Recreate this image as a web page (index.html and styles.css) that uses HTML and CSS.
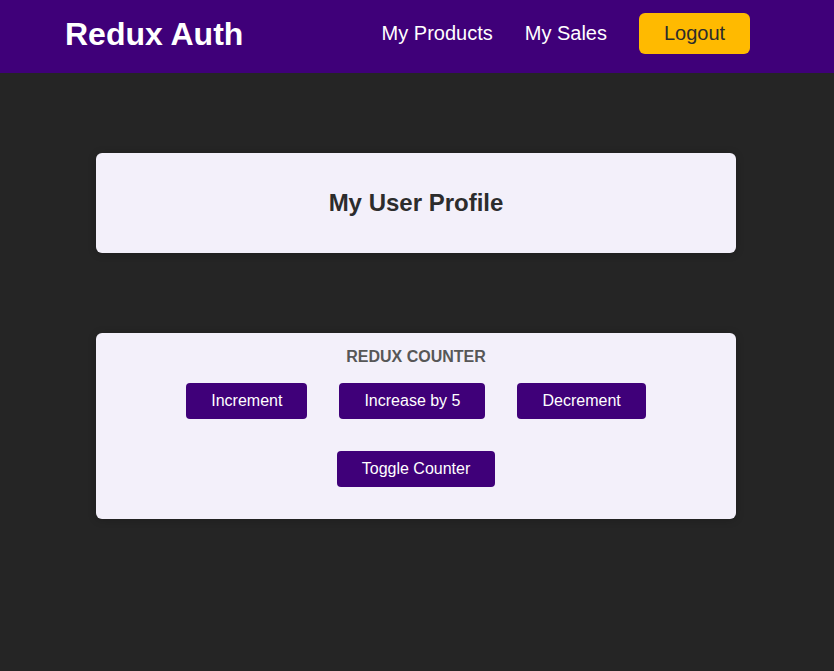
FILE: index.html
```html
<!DOCTYPE html>
<html lang="en">
<head>
<meta charset="utf-8">
<title>Redux Auth</title>
<link rel="stylesheet" href="styles.css">
</head>
<body>
<header class="header">
  <h1 class="brand">Redux Auth</h1>
  <nav class="nav">
    <a class="nav-link" href="#">My Products</a>
    <a class="nav-link" href="#">My Sales</a>
    <button class="logout">Logout</button>
  </nav>
</header>
<main class="main">
  <section class="card profile">
    <h2 class="profile-title">My User Profile</h2>
  </section>
  <section class="card counter">
    <h1 class="counter-title">Redux Counter</h1>
    <div class="row">
      <button class="btn">Increment</button>
      <button class="btn">Increase by 5</button>
      <button class="btn">Decrement</button>
    </div>
    <div class="row">
      <button class="btn">Toggle Counter</button>
    </div>
  </section>
</main>
</body>
</html>
```
FILE: styles.css
```css
* { box-sizing: border-box; }
html, body { margin: 0; padding: 0; }
body {
  background: #252525;
  font-family: "Liberation Sans", Arial, sans-serif;
  min-height: 671px;
}
.header {
  height: 73px;
  background: #3f0079;
  display: flex;
  align-items: center;
  justify-content: space-between;
  padding: 0 84px 6px 65px;
}
.brand {
  margin: 0;
  color: #fff;
  font-size: 32px;
  font-weight: bold;
  line-height: 1;
}
.nav {
  display: flex;
  align-items: center;
  gap: 32px;
}
.nav-link {
  color: #fff;
  text-decoration: none;
  font-size: 20px;
}
.logout {
  font-family: inherit;
  font-size: 20px;
  color: #2c2c2c;
  background: #ffba00;
  border: 0;
  border-radius: 6px;
  height: 41px;
  width: 111px;
  padding: 0;
}
.main {
  display: flex;
  flex-direction: column;
  align-items: center;
  gap: 80px;
  padding: 80px 2px 0 0;
}
.card {
  width: 640px;
  background: #f3f0fa;
  border-radius: 6px;
  box-shadow: 0 1px 8px rgba(0,0,0,0.2);
}
.profile {
  height: 100px;
  display: flex;
  align-items: center;
  justify-content: center;
}
.profile-title {
  margin: 0;
  font-size: 24px;
  font-weight: bold;
  color: #2c2c2c;
}
.counter {
  height: 186px;
  padding: 15px 0 0;
  display: flex;
  flex-direction: column;
  align-items: center;
}
.counter-title {
  margin: 0;
  font-size: 16px;
  line-height: 18px;
  font-weight: bold;
  text-transform: uppercase;
  color: #575757;
}
.row {
  display: flex;
  justify-content: center;
  gap: 32px;
  margin-top: 17px;
}
.row + .row { margin-top: 32px; }
.btn {
  font-family: inherit;
  font-size: 16px;
  color: #fff;
  background: #3f0079;
  border: 0;
  border-radius: 4px;
  height: 36px;
  padding: 0 25px;
}
```
